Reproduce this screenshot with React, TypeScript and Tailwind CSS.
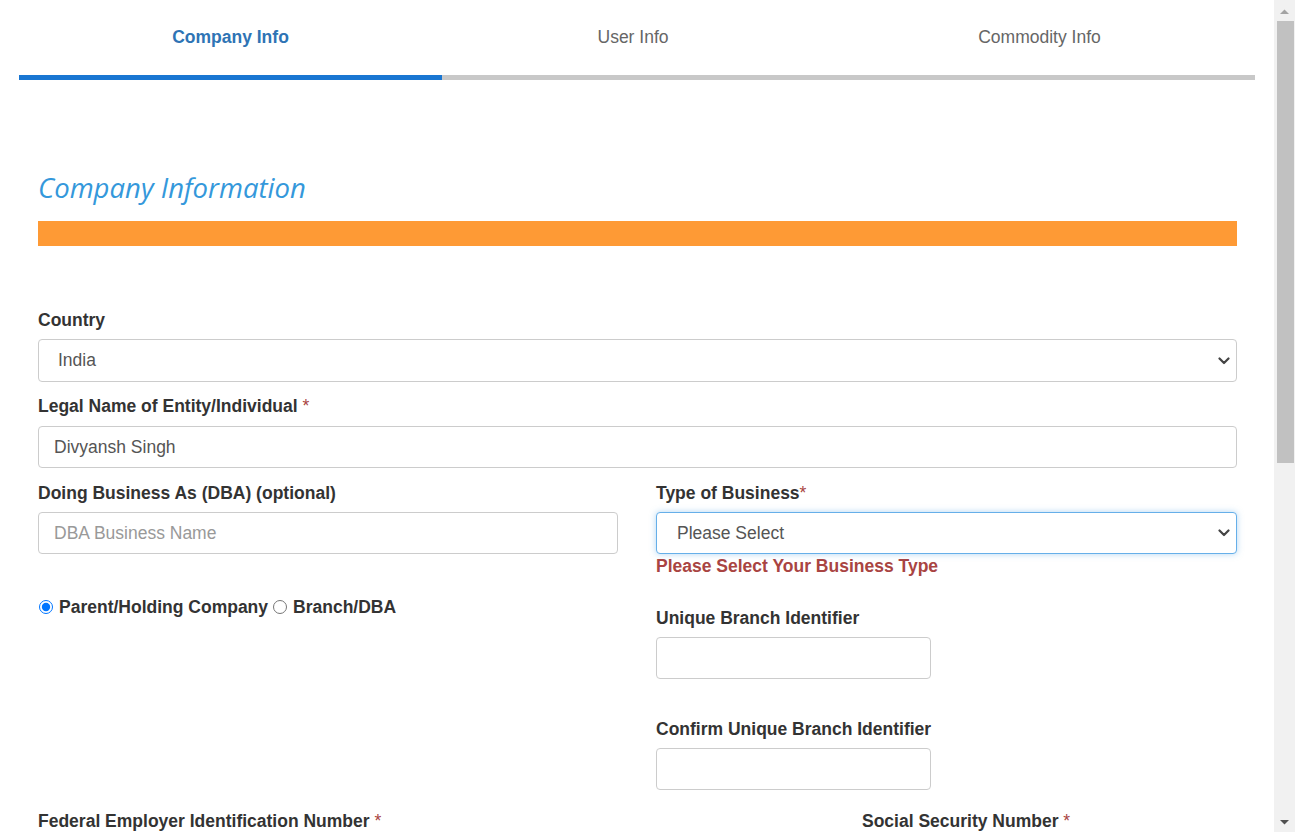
import React from "react";

const Req = () => <span className="text-[#a94442] font-normal"> *</span>;

function Chevron() {
  return (
    <svg className="pointer-events-none absolute right-[7px] top-1/2 -translate-y-1/2" width="12" height="8" viewBox="0 0 12 8">
      <path d="M1.5 1.5 L6 6 L10.5 1.5" fill="none" stroke="#444" strokeWidth="2.2" strokeLinecap="round" strokeLinejoin="round" />
    </svg>
  );
}

function FakeScrollbar() {
  return (
    <div className="fixed right-0 top-0 h-[832px] w-[21px] bg-[#f1f1f1] flex flex-col items-center">
      <svg width="21" height="19" viewBox="0 0 21 19" className="shrink-0">
        <path d="M6 14 L10.5 9.5 L15 14 Z" fill="#a3a3a3" />
      </svg>
      <div className="mt-[2px] ml-[1px] w-[17px] h-[442px] bg-[#c1c1c1]" />
      <div className="flex-1" />
      <svg width="21" height="19" viewBox="0 0 21 19" className="shrink-0">
        <path d="M6 7 L10.5 11.5 L15 7 Z" fill="#505050" />
      </svg>
    </div>
  );
}

export default function App() {
  return (
    <div className="bg-white min-h-[1500px] text-[#333]" style={{ fontFamily: '"Liberation Sans", Arial, sans-serif' }}>
      <div className="pl-[19px]">
        <div className="w-[1236px]">
          {/* Tabs */}
          <div className="flex h-[75px] items-center text-[17.5px]">
            <div className="w-[423px] text-center font-bold text-[#2e74b5]">Company Info</div>
            <div className="w-[382px] text-center text-[#666]">User Info</div>
            <div className="flex-1 text-center text-[#666]">Commodity Info</div>
          </div>
          <div className="flex h-[5px]">
            <div className="w-[423px] bg-[#1976d2]" />
            <div className="flex-1 bg-[#c8c8c8]" />
          </div>

          {/* Form */}
          <div className="pl-[19px] pr-[18px]">
            <h2
              className="mt-[91px] text-[27.5px] leading-[34px] italic text-[#3498db]"
              style={{ fontFamily: '"Open Sans", "DejaVu Sans", sans-serif' }}
            >
              Company Information
            </h2>
            <div className="mt-[16px] h-[25px] bg-[#fe9a35]" />

            <div className="mt-[62px] text-[17.5px] leading-[24px] font-bold">Country</div>
            <div className="relative mt-[7px]">
              <select className="w-full h-[43px] appearance-none rounded-[4px] border border-[#ccc] bg-white pl-[19px] text-[17.5px] text-[#555] outline-none">
                <option>India</option>
              </select>
              <Chevron />
            </div>

            <div className="mt-[12px] text-[17.5px] leading-[24px] font-bold">
              Legal Name of Entity/Individual<Req />
            </div>
            <input
              className="mt-[8px] block w-full h-[42px] rounded-[4px] border border-[#ccc] px-[15px] text-[17.5px] text-[#555] outline-none"
              defaultValue="Divyansh Singh"
            />

            <div className="grid grid-cols-[580px_1fr] gap-x-[38px]">
              {/* Left column */}
              <div>
                <div className="mt-[13px] text-[17.5px] leading-[24px] font-bold">Doing Business As (DBA) (optional)</div>
                <input
                  className="mt-[7px] block w-full h-[42px] rounded-[4px] border border-[#ccc] px-[15px] text-[17.5px] text-[#555] outline-none placeholder:text-[#999]"
                  placeholder="DBA Business Name"
                />
                <div className="mt-[41px] flex items-center h-[24px] text-[17.5px] font-bold">
                  <input type="radio" name="ctype" defaultChecked className="m-0 ml-[1px] mr-[6px] w-[14px] h-[14px]" />
                  <span>Parent/Holding Company</span>
                  <input type="radio" name="ctype" className="m-0 ml-[5px] mr-[6px] w-[14px] h-[14px]" />
                  <span>Branch/DBA</span>
                </div>
              </div>

              {/* Right column */}
              <div>
                <div className="mt-[13px] text-[17.5px] leading-[24px] font-bold">
                  Type of Business<span className="text-[#a94442] font-normal">*</span>
                </div>
                <div className="relative mt-[7px]">
                  <select className="w-full h-[42px] appearance-none rounded-[4px] border border-[#66afe9] shadow-[0_0_6px_rgba(102,175,233,0.5)] bg-white pl-[20px] text-[17.5px] text-[#555] outline-none">
                    <option>Please Select</option>
                  </select>
                  <Chevron />
                </div>
                <div className="text-[17.5px] leading-[24px] font-bold text-[#a94442]">Please Select Your Business Type</div>

                <div className="mt-[28px] text-[17.5px] leading-[24px] font-bold">Unique Branch Identifier</div>
                <input className="mt-[7px] block w-[275px] h-[42px] rounded-[4px] border border-[#ccc] px-[15px] text-[17.5px] outline-none" />

                <div className="mt-[38px] text-[17.5px] leading-[24px] font-bold">Confirm Unique Branch Identifier</div>
                <input className="mt-[7px] block w-[275px] h-[42px] rounded-[4px] border border-[#ccc] px-[15px] text-[17.5px] outline-none" />
              </div>
            </div>

            <div className="mt-[19px] flex">
              <div className="w-[824px]">
                <div className="text-[17.5px] leading-[24px] font-bold">
                  Federal Employer Identification Number<Req />
                </div>
                <input className="mt-[7px] block w-[580px] h-[42px] rounded-[4px] border border-[#ccc] px-[15px] text-[17.5px] outline-none" />
              </div>
              <div className="flex-1">
                <div className="text-[17.5px] leading-[24px] font-bold">
                  Social Security Number<Req />
                </div>
                <input className="mt-[7px] block w-full h-[42px] rounded-[4px] border border-[#ccc] px-[15px] text-[17.5px] outline-none" />
              </div>
            </div>
          </div>
        </div>
      </div>
      <FakeScrollbar />
    </div>
  );
}
